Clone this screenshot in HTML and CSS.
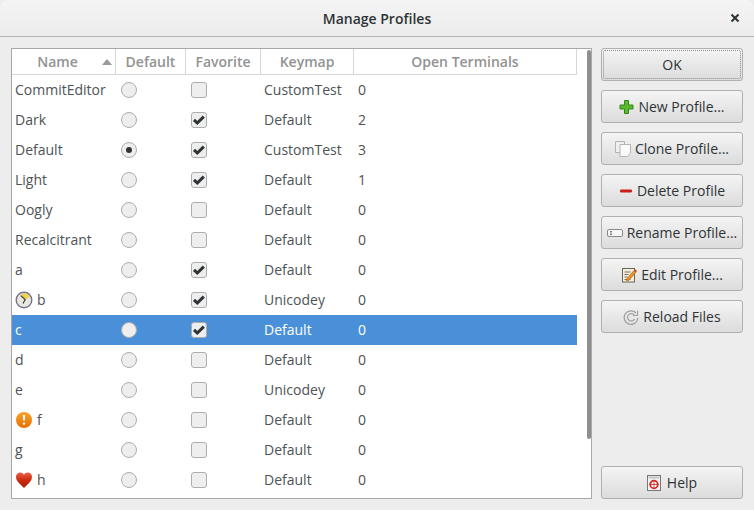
FILE: index.html
```html
<!DOCTYPE html>
<html lang="en">
<head>
<meta charset="utf-8">
<title>Manage Profiles</title>
<link rel="stylesheet" href="styles.css">
</head>
<body>
<div class="window">
  <header class="titlebar">
    <span class="title">Manage Profiles</span>
    <svg class="close" width="10" height="10" viewBox="0 0 10 10"><path d="M1.500 1.500l7 7M8.500 1.500l-7 7" stroke="#2e3436" stroke-width="2" fill="none"/></svg>
  </header>
  <main class="content">
    <section class="list">
      <div class="table">
        <div class="row head">
          <div class="c name">Name<svg class="sort" width="10" height="6" viewBox="0 0 10 6"><path d="M5 0l5 6H0z" fill="#9a9a9a"/></svg></div>
          <div class="c def">Default</div>
          <div class="c fav">Favorite</div>
          <div class="c key">Keymap</div>
          <div class="c open">Open Terminals</div>
        </div>
        <div class="row"><div class="c name">CommitEditor</div><div class="c def"><i class="radio"></i></div><div class="c fav"><i class="check"></i></div><div class="c key">CustomTest</div><div class="c open">0</div></div>
        <div class="row"><div class="c name">Dark</div><div class="c def"><i class="radio"></i></div><div class="c fav"><i class="check on"><svg width="14" height="14" viewBox="0 0 14 14"><path d="M2 6.800l3.300 3.200 6.500-6.400" stroke="#2e3436" stroke-width="3" fill="none"/></svg></i></div><div class="c key">Default</div><div class="c open">2</div></div>
        <div class="row"><div class="c name">Default</div><div class="c def"><i class="radio dot"></i></div><div class="c fav"><i class="check on"><svg width="14" height="14" viewBox="0 0 14 14"><path d="M2 6.800l3.300 3.200 6.500-6.400" stroke="#2e3436" stroke-width="3" fill="none"/></svg></i></div><div class="c key">CustomTest</div><div class="c open">3</div></div>
        <div class="row"><div class="c name">Light</div><div class="c def"><i class="radio"></i></div><div class="c fav"><i class="check on"><svg width="14" height="14" viewBox="0 0 14 14"><path d="M2 6.800l3.300 3.200 6.500-6.400" stroke="#2e3436" stroke-width="3" fill="none"/></svg></i></div><div class="c key">Default</div><div class="c open">1</div></div>
        <div class="row"><div class="c name">Oogly</div><div class="c def"><i class="radio"></i></div><div class="c fav"><i class="check"></i></div><div class="c key">Default</div><div class="c open">0</div></div>
        <div class="row"><div class="c name">Recalcitrant</div><div class="c def"><i class="radio"></i></div><div class="c fav"><i class="check"></i></div><div class="c key">Default</div><div class="c open">0</div></div>
        <div class="row"><div class="c name">a</div><div class="c def"><i class="radio"></i></div><div class="c fav"><i class="check on"><svg width="14" height="14" viewBox="0 0 14 14"><path d="M2 6.800l3.300 3.200 6.500-6.400" stroke="#2e3436" stroke-width="3" fill="none"/></svg></i></div><div class="c key">Default</div><div class="c open">0</div></div>
        <div class="row"><div class="c name"><svg class="pi" width="18" height="18" viewBox="0 0 18 18"><circle cx="9" cy="9" r="7.800" fill="#e9e7e0" stroke="#77738f" stroke-width="1.400"/><path d="M9 9L5.800 2.800A6.800 6.800 0 0 1 14.800 6z" fill="#ecd24f"/><path d="M5.800 4.600L10.200 8.600 8 12.600" stroke="#333" stroke-width="1.100" fill="none"/></svg>b</div><div class="c def"><i class="radio"></i></div><div class="c fav"><i class="check on"><svg width="14" height="14" viewBox="0 0 14 14"><path d="M2 6.800l3.300 3.200 6.500-6.400" stroke="#2e3436" stroke-width="3" fill="none"/></svg></i></div><div class="c key">Unicodey</div><div class="c open">0</div></div>
        <div class="row sel"><div class="c name">c</div><div class="c def"><i class="radio"></i></div><div class="c fav"><i class="check on"><svg width="14" height="14" viewBox="0 0 14 14"><path d="M2 6.800l3.300 3.200 6.500-6.400" stroke="#2e3436" stroke-width="3" fill="none"/></svg></i></div><div class="c key">Default</div><div class="c open">0</div></div>
        <div class="row"><div class="c name">d</div><div class="c def"><i class="radio"></i></div><div class="c fav"><i class="check"></i></div><div class="c key">Default</div><div class="c open">0</div></div>
        <div class="row"><div class="c name">e</div><div class="c def"><i class="radio"></i></div><div class="c fav"><i class="check"></i></div><div class="c key">Unicodey</div><div class="c open">0</div></div>
        <div class="row"><div class="c name"><svg class="pi" width="18" height="18" viewBox="0 0 18 18"><defs><linearGradient id="og" x1="0" y1="0" x2="0" y2="1"><stop offset="0" stop-color="#f9a32b"/><stop offset="1" stop-color="#e86f00"/></linearGradient></defs><circle cx="9" cy="9" r="8" fill="url(#og)"/><path d="M9 4v5.600" stroke="#fff" stroke-width="2"/><circle cx="9" cy="12.600" r="1.200" fill="#fff"/></svg>f</div><div class="c def"><i class="radio"></i></div><div class="c fav"><i class="check"></i></div><div class="c key">Default</div><div class="c open">0</div></div>
        <div class="row"><div class="c name">g</div><div class="c def"><i class="radio"></i></div><div class="c fav"><i class="check"></i></div><div class="c key">Default</div><div class="c open">0</div></div>
        <div class="row"><div class="c name"><svg class="pi" width="18" height="18" viewBox="0 0 18 18"><defs><linearGradient id="hg" x1="0" y1="0" x2="0" y2="1"><stop offset="0" stop-color="#e8604a"/><stop offset=".5" stop-color="#cc2a0c"/><stop offset="1" stop-color="#a81c06"/></linearGradient></defs><path d="M9 17C6 13.500 1 10.500 1 6 1 3.400 3 1.600 5.200 1.600 6.800 1.600 8.200 2.400 9 3.800 9.800 2.400 11.200 1.600 12.800 1.600 15 1.600 17 3.400 17 6c0 4.500-5 7.500-8 11z" fill="url(#hg)"/></svg>h</div><div class="c def"><i class="radio"></i></div><div class="c fav"><i class="check"></i></div><div class="c key">Default</div><div class="c open">0</div></div>
      </div>
      <div class="scrolltrack"><div class="thumb"></div></div>
    </section>
    <aside class="buttons">
      <button class="btn ok"><span>OK</span></button>
      <button class="btn"><svg width="15" height="16" viewBox="0 0 15 16"><path d="M5.500 1.500h4V6H14v4H9.500v4.500h-4V10H1V6h4.500z" fill="#5cb82e" stroke="#2f8a14"/></svg>New Profile...</button>
      <button class="btn"><svg width="16" height="16" viewBox="0 0 16 16"><path d="M.5 .5h9v11h-9z" fill="#f0f0ee" stroke="#b4b4b4"/><path d="M5 3.500h10.500V12l-3 3.500H5z" fill="#fafafa" stroke="#b4b4b4"/></svg>Clone Profile...</button>
      <button class="btn"><svg width="14" height="16" viewBox="0 0 14 16"><rect x="1" y="6.500" width="12" height="3" rx="1" fill="#cc1f1a"/></svg>Delete Profile</button>
      <button class="btn"><svg width="16" height="16" viewBox="0 0 16 16"><rect x=".5" y="4.500" width="15" height="7" rx="1.500" fill="#f6f6f6" stroke="#8a8a8a"/><path d="M3 6.500h2M3 9.500h2M4 6.500v3" stroke="#666" stroke-width=".8" fill="none"/></svg>Rename Profile...</button>
      <button class="btn"><svg width="16" height="16" viewBox="0 0 16 16"><rect x="1.500" y="1.500" width="12" height="13.500" fill="#f4efdc" stroke="#6b6656"/><path d="M3.500 5h6M3.500 7.500h4M3.500 10h3M3.500 12.500h6" stroke="#77725f"/><path d="M6 11.500L13 3.500l2 1.700-7 8-2.500.8z" fill="#e8912a" stroke="#a85d10" stroke-width=".6"/><path d="M13 3.500l1-1.200 2 1.700-1 1.200z" fill="#d9352a"/></svg>Edit Profile...</button>
      <button class="btn"><svg width="16" height="16" viewBox="0 0 16 16"><path d="M13 4A6.800 6.800 0 1 0 14.800 9" fill="none" stroke="#a0a0a0" stroke-width="1.300"/><path d="M11.500 6.500A3.700 3.700 0 1 0 11.500 10" fill="none" stroke="#a0a0a0" stroke-width="1.200"/><path d="M14.500 1.500v5H10" fill="none" stroke="#a0a0a0" stroke-width="1.200"/></svg>Reload Files</button>
      <div class="spacer"></div>
      <button class="btn help"><svg width="14" height="16" viewBox="0 0 14 16"><rect x=".5" y=".5" width="13" height="15" fill="#f2f2f2" stroke="#777"/><rect x="1.500" y="1.500" width="11" height="2" fill="#c4c4c4"/><circle cx="7" cy="9.500" r="3.800" fill="#fff" stroke="#d42a22" stroke-width="1.800"/><path d="M7 5v9M2.500 9.500h9" stroke="#d42a22" stroke-width=".8"/></svg>Help</button>
    </aside>
  </main>
</div>
</body>
</html>
```

FILE: styles.css
```css
* { box-sizing: border-box; }
html, body { margin: 0; padding: 0; }
body {
  width: 754px;
  height: 510px;
  overflow: hidden;
  background: #ededed;
  font-family: "Open Sans", "Noto Sans", sans-serif;
  font-size: 14px;
  color: #4e5355;
}
.window { display: flex; flex-direction: column; height: 510px; }
.titlebar {
  height: 37px;
  flex: none;
  display: flex;
  align-items: center;
  justify-content: center;
  position: relative;
  background: linear-gradient(#f4f4f4, #ececec);
  border-bottom: 1px solid #b5b5b2;
  border-radius: 8px 8px 0 0;
}
.title { font-weight: 600; font-size: 14px; color: #2e3436; }
.close { position: absolute; right: 14px; top: 13px; }
.content { flex: 1; display: flex; padding: 11px; gap: 9px; min-height: 0; }
.list {
  width: 581px;
  flex: none;
  height: 451px;
  background: #fff;
  border: 1px solid #a8a8a8;
  display: flex;
  overflow: hidden;
}
.table { width: 565px; flex: none; }
.row { display: flex; height: 30px; align-items: center; }
.c { height: 100%; display: flex; align-items: center; flex: none; padding-bottom: 2px; }
.name { width: 104px; padding-left: 3px; }
.def { width: 70px; padding-left: 5px; }
.fav { width: 75px; padding-left: 5px; }
.key { width: 93px; padding-left: 3px; }
.open { width: 223px; padding-left: 4px; }
.head { height: 26px; border-bottom: 1px solid #d6d6d6; border-right: 1px solid #d6d6d6; color: #929292; font-weight: 600; }
.head .c { border-right: 1px solid #d6d6d6; justify-content: center; padding: 0 0 1px; }
.head .open { border-right: 0; width: 222px; }
.head .name { position: relative; padding-right: 12px; }
.sort { position: absolute; right: 3px; top: 10px; }
.pi { margin: 2px 4px 0 0; flex: none; }
.sel { background: #4a90d9; color: #fff; }
.radio, .check {
  display: flex;
  align-items: center;
  justify-content: center;
  width: 16px;
  height: 16px;
  margin-top: 2px;
  background: #eeeeee;
  border: 1px solid #adadad;
}
.radio { border-radius: 50%; }
.check { border-radius: 3px; }
.dot::after { content: ""; width: 6px; height: 6px; border-radius: 50%; background: #2e3436; }
.scrolltrack { width: 14px; flex: none; position: relative; }
.thumb { position: absolute; right: 0; top: 1px; width: 4px; height: 389px; background: #8e8e8e; border-radius: 2px; }
.buttons { flex: 1; display: flex; flex-direction: column; gap: 9px; height: 451px; }
.btn {
  height: 33px;
  flex: none;
  display: flex;
  align-items: center;
  justify-content: center;
  gap: 4px;
  padding: 0;
  font: inherit;
  color: #2e3436;
  background: linear-gradient(#f4f4f4, #dcdcdc);
  border: 1px solid #b0b0ae;
  border-radius: 3px;
}
.help { gap: 6px; }
.ok { position: relative; }
.ok::after { content: ""; position: absolute; inset: 1px; border: 1px dotted #8a8a8a; border-radius: 2px; }
.spacer { flex: 1; }
```
